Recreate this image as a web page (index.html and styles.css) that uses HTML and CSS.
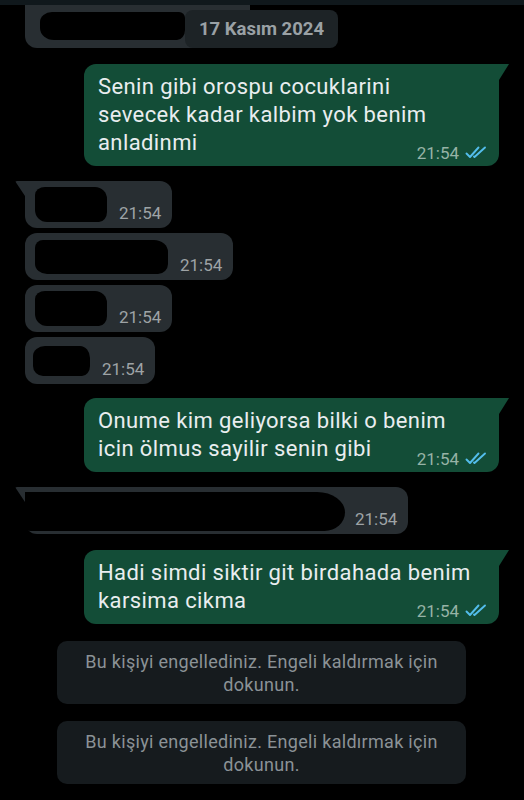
FILE: index.html
```html
<!DOCTYPE html>
<html>
<head>
    <meta charset="utf-8">
    <title>Sohbet</title>
    <link rel="stylesheet" href="styles.css">
</head>
<body>
<div class="toolbar-edge"></div>

<div class="chat">
    <div class="top-row">
        <div class="bubble in cut">
            <div class="scribble s-top"></div>
        </div>
        <div class="date-chip">17 Kasım 2024</div>
    </div>

    <div class="bubble out tail first">
        <div class="text">Senin gibi orospu cocuklarini<br>sevecek kadar kalbim yok benim<br>anladinmi<span class="meta"><span class="time">21:54</span><svg class="ticks" width="22" height="14" viewBox="0 0 22 14"><path d="M1.5 7.5 L5 11 L13.5 1.5"/><path d="M9 10.5 L9.5 11 L20 1.5"/></svg></span></div>
    </div>

    <div class="bubble in tail gap-15">
        <div class="scribble s-a"></div>
        <span class="time">21:54</span>
    </div>
    <div class="bubble in gap-5">
        <div class="scribble s-b"></div>
        <span class="time">21:54</span>
    </div>
    <div class="bubble in gap-5">
        <div class="scribble s-a"></div>
        <span class="time">21:54</span>
    </div>
    <div class="bubble in gap-5">
        <div class="scribble s-c"></div>
        <span class="time">21:54</span>
    </div>

    <div class="bubble out tail gap-14">
        <div class="text">Onume kim geliyorsa bilki o benim<br>icin ölmus sayilir senin gibi<span class="meta"><span class="time">21:54</span><svg class="ticks" width="22" height="14" viewBox="0 0 22 14"><path d="M1.5 7.5 L5 11 L13.5 1.5"/><path d="M9 10.5 L9.5 11 L20 1.5"/></svg></span></div>
    </div>

    <div class="bubble in tail wide gap-15">
        <div class="scribble s-long"></div>
        <span class="time">21:54</span>
    </div>

    <div class="bubble out tail gap-16">
        <div class="text">Hadi simdi siktir git birdahada benim<br>karsima cikma<span class="meta"><span class="time">21:54</span><svg class="ticks" width="22" height="14" viewBox="0 0 22 14"><path d="M1.5 7.5 L5 11 L13.5 1.5"/><path d="M9 10.5 L9.5 11 L20 1.5"/></svg></span></div>
    </div>

    <div class="notice">Bu kişiyi engellediniz. Engeli kaldırmak için<br>dokunun.</div>
    <div class="notice">Bu kişiyi engellediniz. Engeli kaldırmak için<br>dokunun.</div>

    <div class="bottom-chip"></div>
</div>
</body>
</html>
```

FILE: styles.css
```css
html, body {
    margin: 0;
    background-color: #000000;
}
body {
    font-family: Roboto, "Noto Sans", sans-serif;
    color: #e9edef;
    height: 800px;
    overflow: hidden;
}
.toolbar-edge {
    height: 5px;
    background-color: #10181c;
}
.chat {
    display: flex;
    flex-direction: column;
}

/* sticky date over the first bubble */
.top-row {
    position: relative;
    height: 43px;
}
.date-chip {
    position: absolute;
    left: 185px;
    top: 5px;
    width: 153px;
    height: 38px;
    box-sizing: border-box;
    border-radius: 8px;
    background-color: #1d2326;
    color: #9aa1a5;
    font-size: 18.5px;
    font-weight: 700;
    display: flex;
    align-items: center;
    justify-content: center;
}

.bubble {
    position: relative;
    box-sizing: border-box;
    border-radius: 12px;
}
.bubble.in {
    align-self: flex-start;
    margin-left: 25px;
    height: 47px;
    padding: 0 11px 0 10px;
    background-color: #282e32;
    display: flex;
    align-items: center;
}
.bubble.in.cut {
    width: 225px;
    height: 43px;
    border-radius: 0 0 12px 12px;
    padding-left: 15px;
}
.bubble.in .time {
    align-self: flex-end;
    margin-bottom: 5px;
    color: #9ea3a6;
}
.bubble.in.tail {
    border-top-left-radius: 0;
}
.bubble.in.tail::before {
    content: "";
    position: absolute;
    left: -10px;
    top: 0;
    width: 10px;
    height: 15px;
    background-color: #282e32;
    clip-path: polygon(0 0, 100% 0, 100% 100%);
    border-top-left-radius: 2px;
}
.bubble.in.wide {
    padding-left: 0;
}

.bubble.out {
    align-self: flex-end;
    margin-right: 25px;
    width: 415px;
    padding: 9px 12px 3px 14px;
    background-color: #134d37;
    display: flow-root;
}
.bubble.out.first {
    margin-top: 16px;
}
.bubble.out.tail {
    border-top-right-radius: 0;
}
.bubble.out.tail::before {
    content: "";
    position: absolute;
    right: -10px;
    top: 0;
    width: 10px;
    height: 16px;
    background-color: #134d37;
    clip-path: polygon(0 0, 100% 0, 0 100%);
}
.text {
    font-size: 22px;
    line-height: 28px;
    letter-spacing: 0.4px;
}
.meta {
    float: right;
    margin: 14px 0 0 10px;
    display: flex;
    align-items: center;
    gap: 6px;
    height: 20px;
    letter-spacing: 0;
}
.bubble.out .time {
    color: #97b3a6;
}
.time {
    font-size: 17px;
    line-height: 20px;
    margin-left: 12px;
}
.meta .time {
    margin-left: 0;
}
.ticks {
    fill: none;
    stroke: #53bdeb;
    stroke-width: 1.9;
    stroke-linecap: round;
    stroke-linejoin: round;
}

/* blacked out text */
.scribble {
    background-color: #000000;
}
.s-top {
    width: 145px;
    height: 28px;
    margin-top: 7px;
    align-self: flex-start;
    border-radius: 12px 6px 8px 14px / 10px 6px 10px 12px;
}
.s-a {
    width: 72px;
    height: 35px;
    border-radius: 10px 12px 8px 12px / 8px 12px 10px 12px;
}
.s-b {
    width: 133px;
    height: 34px;
    border-radius: 8px 14px 10px 12px / 8px 12px 10px 10px;
}
.s-c {
    width: 57px;
    height: 30px;
    margin-left: -2px;
    border-radius: 12px 10px 8px 10px / 10px 12px 10px 10px;
}
.s-long {
    width: 327px;
    height: 39px;
    margin-left: -7px;
    margin-top: 2px;
    border-radius: 6px 30px 22px 14px / 4px 22px 20px 8px;
}
.bubble.in.wide .time {
    margin-left: 10px;
}

.gap-5 { margin-top: 5px; }
.gap-14 { margin-top: 14px; }
.gap-15 { margin-top: 15px; }
.gap-16 { margin-top: 16px; }

.notice {
    align-self: flex-start;
    margin: 17px 0 0 57px;
    width: 409px;
    box-sizing: border-box;
    padding: 9px 6px 8px;
    border-radius: 10px;
    background-color: #161b1e;
    color: #8b9296;
    font-size: 18px;
    letter-spacing: 0.3px;
    line-height: 23px;
    text-align: center;
}
.bottom-chip {
    margin: 16px 0 0 130px;
    width: 260px;
    height: 30px;
    border-radius: 8px;
    background-color: #1d2326;
}
```
